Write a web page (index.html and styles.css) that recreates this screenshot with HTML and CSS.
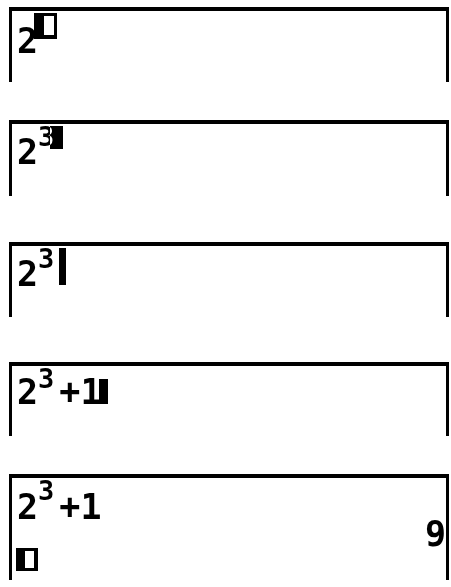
FILE: index.html
```html
<!DOCTYPE html>
<html>
<head>
<meta charset="utf-8">
<link rel="stylesheet" href="styles.css">
</head>
<body>
<div class="screens">
  <div class="panel p1">
    <div class="row">
      <span class="main m17">2</span>
      <span class="ph ph-sup"></span>
    </div>
  </div>
  <div class="panel p2">
    <div class="row">
      <span class="main m15">2</span>
      <span class="sup">3</span>
      <span class="inv"></span>
    </div>
  </div>
  <div class="panel p3">
    <div class="row">
      <span class="main m15">2</span>
      <span class="sup">3</span>
      <span class="bar bar-tall"></span>
    </div>
  </div>
  <div class="panel p4">
    <div class="row">
      <span class="main m13">2</span>
      <span class="sup">3</span>
      <span class="main m13 plus">+</span>
      <span class="main m13">1</span>
      <span class="bar bar-short"></span>
    </div>
  </div>
  <div class="panel p5">
    <div class="row r1">
      <span class="main m16">2</span>
      <span class="sup">3</span>
      <span class="main m16 plus">+</span>
      <span class="main m16">1</span>
    </div>
    <div class="row r2">
      <span class="main">9</span>
    </div>
    <div class="row r3">
      <span class="ph ph-line"></span>
    </div>
  </div>
</div>
</body>
</html>
```

FILE: styles.css
```css
html, body {
  margin: 0;
  padding: 0;
  background: #fff;
}

.screens {
  display: flex;
  flex-direction: column;
  padding-left: 9px;
}

.panel {
  box-sizing: border-box;
  width: 440px;
  border: 3px solid #000;
  border-top-width: 4px;
  border-bottom: none;
  padding-left: 5px;
  font-family: "DejaVu Sans Mono", monospace;
  font-weight: bold;
  color: #000;
}

.p1 { margin-top: 7px; height: 75px; }
.p2 { margin-top: 38px; height: 76px; }
.p3 { margin-top: 46px; height: 75px; }
.p4 { margin-top: 45px; height: 74px; }
.p5 { margin-top: 38px; height: 106px; }

.row {
  display: flex;
  align-items: flex-start;
}

.main {
  display: block;
  font-size: 35px;
  line-height: 35px;
}

.m13 { margin-top: 9px; }
.m15 { margin-top: 11px; }
.m16 { margin-top: 12px; }
.m17 { margin-top: 13px; }

.sup {
  display: block;
  font-size: 27px;
  line-height: 27px;
  margin-top: -1px;
}

.plus { margin-left: 5px; }

.ph {
  display: block;
  box-sizing: border-box;
  background: #fff;
  border-style: solid;
  border-color: #000;
}

.ph-sup {
  margin-top: 2px;
  margin-left: -4px;
  width: 23px;
  height: 26px;
  border-width: 3px 3px 4px 10px;
}

.ph-line {
  margin-left: -1px;
  width: 22px;
  height: 23px;
  border-width: 3px 4px 3px 9px;
}

.inv {
  display: block;
  margin-top: 2px;
  margin-left: -4px;
  width: 13px;
  height: 23px;
  background: #fff;
  mix-blend-mode: difference;
}

.bar {
  display: block;
  background: #000;
}

.bar-tall {
  margin-top: 2px;
  margin-left: 5px;
  width: 7px;
  height: 37px;
}

.bar-short {
  margin-top: 13px;
  margin-left: -3px;
  width: 9px;
  height: 25px;
}

.r1 { height: 39px; }
.r2 {
  height: 31px;
  justify-content: flex-end;
}
.r3 { height: 25px; }
```
